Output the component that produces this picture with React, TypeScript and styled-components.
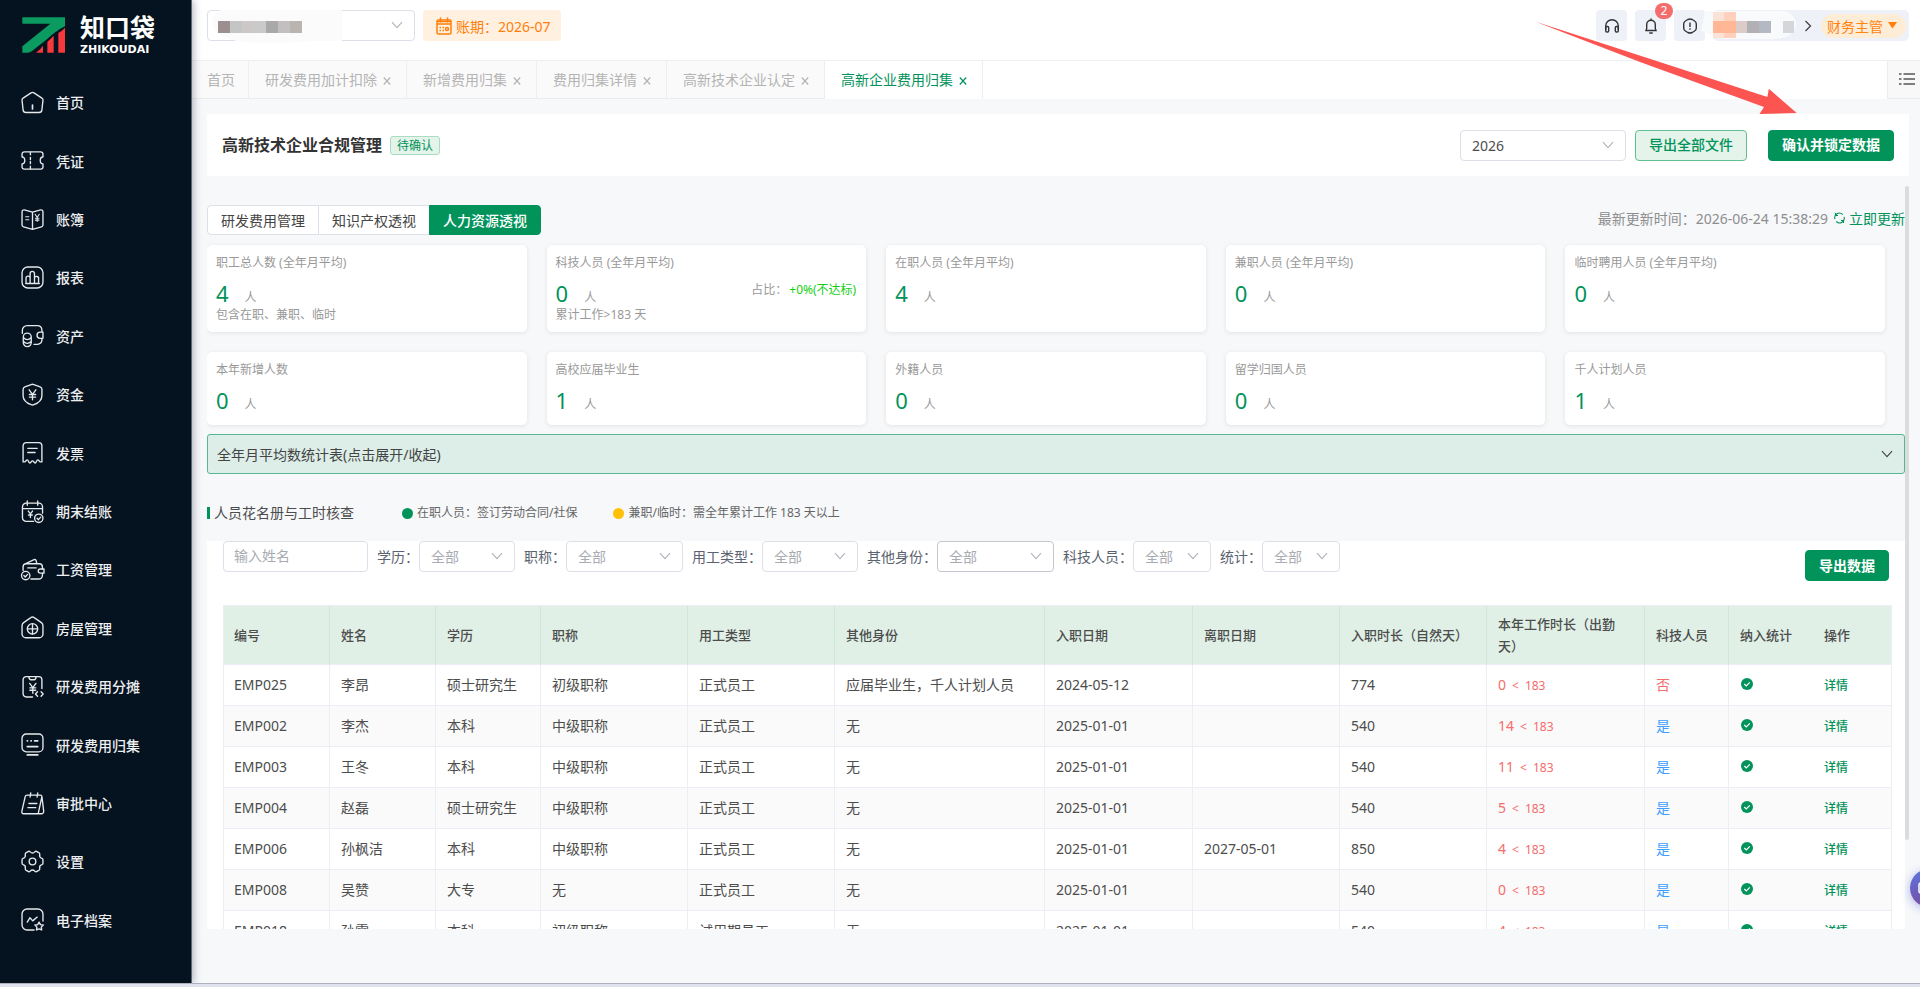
import React from "react";
import styled, { createGlobalStyle, css } from "styled-components";

const GREEN = "#02935b";
const FONT = `"Noto Sans", "Noto Sans CJK SC", sans-serif`;

const Global = createGlobalStyle`
  *, *::before, *::after { box-sizing: border-box; }
  body { margin: 0; font-family: ${FONT}; font-size: 14px; color: #4d4d4d; background: #f7f8fa; }
  button, input, select { font-family: inherit; font-size: 14px; }
  button { cursor: pointer; }
`;

/* ---------- shell ---------- */
const Shell = styled.div`
  display: flex;
  flex-direction: column;
  height: 100vh;
  overflow: hidden;
  position: relative;
`;
const Body = styled.div`
  display: flex;
  flex: 1;
  min-height: 0;
`;
const BottomStrip = styled.div`
  height: 4px;
  flex: none;
  background: #dfe2ee;
  border-top: 1px solid #adb1bb;
  position: relative;
  z-index: 2;
`;
const Sidebar = styled.aside`
  width: 192px;
  flex: none;
  display: flex;
  flex-direction: column;
  padding: 15px 0 34px;
  background: #05121f;
  border-right: 1px solid #5d6672;
  box-shadow: 1px 0 8px rgba(10, 20, 50, 0.35);
  position: relative;
  z-index: 1;
`;
const Logo = styled.div`
  display: flex;
  gap: 14px;
  padding-left: 22px;
  height: 58px;
  color: #fff;
`;
const LogoText = styled.div`
  display: flex;
  flex-direction: column;
  gap: 4px;
`;
const LogoName = styled.div`
  font-size: 25px;
  line-height: 24px;
  font-weight: 700;
`;
const LogoLatin = styled.div`
  font: 700 11px/14px "DejaVu Sans", sans-serif;
`;
const Menu = styled.nav`
  flex: 1;
  display: flex;
  flex-direction: column;
`;
const MenuItem = styled.a`
  flex: 1;
  display: flex;
  align-items: center;
  gap: 12px;
  padding-left: 21px;
  color: #eceef0;
  font-weight: 500;
  text-decoration: none;
  white-space: nowrap;
`;
const MenuSvg = styled.svg`
  width: 23px;
  height: 23px;
  flex: none;
  fill: none;
  stroke: #e6e9ec;
  stroke-width: 1.3;
  stroke-linecap: round;
  stroke-linejoin: round;
`;
const Main = styled.main`
  flex: 1;
  min-width: 0;
  display: flex;
  flex-direction: column;
`;

/* ---------- top bar ---------- */
const TopBar = styled.header`
  display: flex;
  gap: 8px;
  height: 61px;
  flex: none;
  padding: 10px 11px 0 15px;
  background: #fff;
  border-bottom: 1px solid #f0f0f0;
`;
const Period = styled.button`
  display: flex;
  align-items: center;
  gap: 4px;
  height: 31px;
  padding: 0 10px 0 13px;
  border: 0;
  border-radius: 4px;
  background: #fff0e0;
  color: #ff7f0a;
`;
const TopRight = styled.div`
  display: flex;
  gap: 8px;
  margin-left: auto;
`;
const IconButton = styled.button`
  position: relative;
  display: flex;
  align-items: center;
  justify-content: center;
  width: 31px;
  height: 31px;
  padding: 0;
  border: 0;
  border-radius: 4px;
  background: #eef1f8;
  color: #333;
`;
const Badge = styled.span`
  position: absolute;
  top: -7px;
  right: -7px;
  width: 18px;
  height: 16px;
  border-radius: 8px;
  background: #f56c6c;
  color: #fff;
  font-size: 12px;
  line-height: 16px;
`;
const User = styled.div`
  position: relative;
  display: flex;
  align-items: center;
  justify-content: flex-end;
  gap: 9px;
  width: 196px;
  height: 31px;
  padding-right: 3px;
  border-radius: 5px;
  background: #eef1f8;
`;
const Role = styled.button`
  display: flex;
  align-items: center;
  gap: 5px;
  height: 24px;
  padding: 0 9px 0 6px;
  border: 0;
  border-radius: 12px;
  background: #fdecd6;
  color: #ff8412;
`;
const Mosaic = styled.svg<{ $left: number; $top: number }>`
  position: absolute;
  left: ${(p) => p.$left}px;
  top: ${(p) => p.$top}px;
  pointer-events: none;
`;

/* ---------- page tabs ---------- */
const TabBar = styled.div`
  display: flex;
  height: 38px;
  flex: none;
  background: #fff;
`;
const PageTab = styled.div<{ $active?: boolean; $first?: boolean }>`
  display: flex;
  align-items: center;
  gap: 6px;
  padding: 0 ${(p) => (p.$first ? 13 : 15)}px 1px ${(p) => (p.$first ? 15 : 16)}px;
  border-right: 1px solid #eeeeee;
  border-bottom: 1px solid ${(p) => (p.$active ? "#fff" : "#ececec")};
  background: ${(p) => (p.$active ? "#fff" : "#fafafa")};
  color: ${(p) => (p.$active ? GREEN : "#b4b4b4")};
  white-space: nowrap;
  a { color: inherit; text-decoration: none; }
`;
const TabClose = styled.button`
  display: flex;
  padding: 3px 0 0;
  border: 0;
  background: none;
  color: inherit;
`;
const TabList = styled.button`
  display: flex;
  align-items: center;
  width: 33px;
  margin-left: auto;
  padding: 0 0 2px 11px;
  border: solid #ececec;
  border-width: 0 0 1px 1px;
  background: #f8f8f8;
  color: #555;
`;

/* ---------- common controls ---------- */
const SelectBox = styled.span<{ $w: number; $dark?: boolean; $muted?: boolean }>`
  position: relative;
  display: inline-flex;
  width: ${(p) => p.$w}px;
  height: 31px;
  select {
    appearance: none;
    width: 100%;
    padding: 0 28px 0 11px;
    border: 1px solid ${(p) => (p.$dark ? "#c4c7d0" : "#dcdfe8")};
    border-radius: 4px;
    background: #fff;
    color: ${(p) => (p.$muted ? "#a8abb2" : "#4d4d4d")};
  }
  > svg:last-child {
    position: absolute;
    right: 12px;
    top: 9px;
    color: #b0b3ba;
    pointer-events: none;
  }
`;
const Button = styled.button<{ $plain?: boolean }>`
  height: 31px;
  padding: 0 13px;
  border: 1px solid ${GREEN};
  border-radius: 4px;
  background: ${GREEN};
  color: #fff;
  font-weight: 700;
  line-height: 20px;
  white-space: nowrap;
  ${(p) =>
    p.$plain &&
    css`
      border-color: #62bf92;
      background: #e5f4ea;
      color: ${GREEN};
      font-weight: 500;
    `}
`;

/* ---------- content ---------- */
const Content = styled.div`
  flex: 1;
  min-height: 0;
  display: flex;
  flex-direction: column;
  padding: 15px 11px 54px 15px;
`;
const TitleCard = styled.section`
  display: flex;
  align-items: center;
  flex: none;
  height: 62px;
  padding: 0 15px;
  background: #fff;
`;
const PageTitle = styled.h1`
  margin: 0;
  font-size: 16px;
  line-height: 24px;
  color: #333;
`;
const Status = styled.span`
  margin: 0 auto 0 8px;
  padding: 0 6px;
  border: 1px solid #a9dcc0;
  border-radius: 3px;
  background: #e5f4ea;
  color: ${GREEN};
  font-size: 12px;
  line-height: 17px;
`;
const TitleActions = styled.div`
  display: flex;
  gap: 9px;
  ${Button} + ${Button} { margin-left: 12px; }
`;
const ScrollArea = styled.div`
  flex: 1;
  min-height: 0;
  display: flex;
`;
const ScrollTrack = styled.div`
  width: 4px;
  flex: none;
  padding-top: 10px;
`;
const ScrollThumb = styled.div`
  height: 88%;
  border-radius: 2px;
  background: #dcdcdc;
`;
const Column = styled.div`
  flex: 1;
  min-width: 0;
  display: flex;
  flex-direction: column;
  overflow: hidden;
`;
const ViewRow = styled.div`
  display: flex;
  align-items: center;
  justify-content: space-between;
  flex: none;
  padding: 29px 0 10px;
`;
const Segments = styled.div`
  display: flex;
`;
const Segment = styled.button<{ $active?: boolean }>`
  height: 30px;
  margin-left: -1px;
  padding: 0 13px;
  border: 1px solid ${(p) => (p.$active ? GREEN : "#dce0e8")};
  background: ${(p) => (p.$active ? GREEN : "#fff")};
  color: ${(p) => (p.$active ? "#fff" : "#444")};
  font-weight: ${(p) => (p.$active ? 500 : 400)};
  &:first-child { margin-left: 0; border-radius: 4px 0 0 4px; }
  &:last-child { border-radius: 0 4px 4px 0; }
`;
const Updated = styled.div`
  display: flex;
  align-items: center;
  gap: 6px;
  padding-bottom: 4px;
  color: #8e8e8e;
`;
const Refresh = styled.button`
  display: flex;
  align-items: center;
  gap: 4px;
  padding: 0;
  border: 0;
  background: none;
  color: ${GREEN};
`;
const Cards = styled.div`
  flex: none;
  display: grid;
  grid-template-columns: repeat(5, minmax(0, 1fr));
  gap: 20px;
  padding-right: 20px;
`;
const Card = styled.article`
  min-height: 73px;
  padding: 9px 10px 8px 9px;
  border-radius: 5px;
  background: #fff;
  box-shadow: 0 1px 5px rgba(0, 0, 0, 0.09);
  color: #999;
  font-size: 12px;
  line-height: 18px;
`;
const CardValue = styled.div`
  display: flex;
  align-items: baseline;
  gap: 16px;
  height: 25px;
  margin-top: 9px;
  strong { color: ${GREEN}; font-size: 22px; line-height: 25px; font-weight: 400; }
`;
const Ratio = styled.span`
  display: flex;
  gap: 2px;
  margin-left: auto;
  align-self: flex-start;
  b { color: #14cf14; font-weight: 400; }
`;
const Collapse = styled.button`
  display: flex;
  align-items: center;
  justify-content: space-between;
  flex: none;
  height: 40px;
  margin-top: 9px;
  padding: 0 11px 0 9px;
  border: 1px solid #56b792;
  border-radius: 3px;
  background: #ddeee8;
  color: #444;
`;
const Legend = styled.div`
  display: flex;
  align-items: center;
  flex: none;
  padding: 28px 0 17px;
  line-height: 22px;
`;
const SectionTitle = styled.h2`
  display: flex;
  align-items: center;
  gap: 4px;
  margin: 0 48px 0 0;
  font-size: 14px;
  font-weight: 400;
  &::before { content: ""; width: 3px; height: 12px; background: ${GREEN}; }
`;
const LegendItem = styled.span<{ $color: string }>`
  display: flex;
  align-items: center;
  gap: 4px;
  margin-right: 36px;
  color: #666;
  font-size: 12px;
  &::before { content: ""; width: 11px; height: 11px; border-radius: 50%; background: ${(p) => p.$color}; }
`;
const Panel = styled.section`
  flex: 1;
  min-height: 0;
  overflow: hidden;
  padding: 0 16px;
  background: #fff;
`;
const Filters = styled.form`
  display: flex;
  gap: 9px;
  height: 64px;
`;
const NameInput = styled.input`
  width: 145px;
  height: 31px;
  padding: 0 10px 2px;
  border: 1px solid #dcdfe8;
  border-radius: 4px;
  &::placeholder { color: #a8abb2; }
`;
const Filter = styled.label`
  display: flex;
  height: 31px;
  line-height: 31px;
  color: #5b6270;
  white-space: nowrap;
`;
const FilterAction = styled.div`
  margin-left: auto;
  padding-top: 9px;
`;
const Table = styled.table`
  width: 100%;
  table-layout: fixed;
  border-collapse: separate;
  border-spacing: 0;
  border: solid #ebeef5;
  border-width: 1px 1px 0;
  th, td { padding: 0 8px 0 11px; text-align: left; border-bottom: 1px solid #ebeef5; border-right: 1px solid #ebeef5; }
  th { height: 59px; padding-right: 14px; background: #e0f0e6; border-right-color: #d2e5d9; font-size: 13px; line-height: 22px; font-weight: 500; }
  td { height: 41px; line-height: 20px; white-space: nowrap; }
  tr > :first-child { padding-left: 10px; }
  tr > :nth-last-child(-n + 3) { padding-right: 0; }
  tr > :nth-last-child(-n + 2) { border-right: 0; }
  tbody tr:nth-child(even) { background: #fafafa; }
`;
const Days = styled.span`
  display: flex;
  align-items: baseline;
  gap: 6px;
  color: #f56c6c;
  small { font-size: 12px; }
`;
const YesNo = styled.span<{ $yes: boolean }>`
  color: ${(p) => (p.$yes ? "#409eff" : "#f56c6c")};
`;
const Detail = styled.a`
  color: ${GREEN};
  font-size: 12px;
  font-weight: 500;
  text-decoration: none;
`;
const Check = styled.svg`
  display: block;
  margin-bottom: 3px;
`;

/* ---------- overlays ---------- */
const Arrow = styled.svg`
  position: absolute;
  top: 18px;
  right: 120px;
  z-index: 3;
  pointer-events: none;
`;
const Assistant = styled.button`
  position: absolute;
  right: -28px;
  bottom: 80px;
  width: 38px;
  height: 38px;
  padding: 0 0 0 8px;
  border: 0;
  border-radius: 50%;
  background: linear-gradient(#5d74de, #7650a6);
  box-shadow: 0 2px 10px rgba(96, 110, 220, 0.5);
  text-align: left;
`;

const Chevron = ({ size = 12 }: { size?: number }) => (
  <svg width={size} height={size} viewBox="0 0 12 12" fill="none" stroke="currentColor" strokeWidth="1.1">
    <path d="M1 3.2 6 8.7 11 3.2" />
  </svg>
);

const menu: { label: string; icon: React.ReactNode }[] = [
  { label: "首页", icon: <><path d="M9.6 1.8a2.6 2.6 0 0 1 2.8 0l7.6 5a2 2 0 0 1 1 2.1l-1 9.2a2.8 2.8 0 0 1-2.8 2.5H4.8a2.8 2.8 0 0 1-2.8-2.5l-1-9.2a2 2 0 0 1 1-2.1z" /><path d="M11 13.5v3.6" strokeWidth="1.6" /></> },
  { label: "凭证", icon: <><path d="M3 2.7h16a2 2 0 0 1 2 2v3q-2.6 0-2.6 3.3T21 14.3v3a2 2 0 0 1-2 2H3a2 2 0 0 1-2-2v-3q2.6 0 2.6-3.3T1 7.7v-3a2 2 0 0 1 2-2z" /><path d="M9 3v2.5M9 8v2M9 12v2M9 16.5V19" /></> },
  { label: "账簿", icon: <><path d="M11 4v16.5L2.4 18A1.8 1.8 0 0 1 1 16.3V3.6a1.8 1.8 0 0 1 2.2-1.8zM11 4v16.5l8.6-2.5a1.8 1.8 0 0 0 1.4-1.7V3.6a1.8 1.8 0 0 0-2.2-1.8z" /><path d="M4.5 8.3h3M4.5 11.3h3M13.5 6l2 3 2-3M15.5 9v4M13.8 9.8h3.4M13.8 11.6h3.4" strokeWidth="1" /></> },
  { label: "报表", icon: <><rect x="1" y="1" width="20" height="20" rx="5.5" /><path d="M4.8 16.7v-5a1.8 1.8 0 0 1 3.9 0v5M8.7 16.7V7.3a2 2 0 0 1 4.2 0v9.4M12.9 11.5a1.9 1.9 0 0 1 3.9 1v4.2M4.5 16.7h13" /></> },
  { label: "资产", icon: <><path d="M1.3 9V6a4.5 4.5 0 0 1 4.5-4.5h10A4.2 4.2 0 0 1 20 5.7v2.1h-1.7a2.7 2.7 0 0 0 0 5.9H20v1.6a4.2 4.2 0 0 1-4.2 4.2h-3.3M18.5 7.8H21v5.9h-2.5" /><path d="M2.2 12.5a3.8 3.8 0 0 1 7.6 0v5.300a3.800 3.800 0 0 1-7.600 0zM2.200 13q3.800 4 7.600 0M2.200 16.500q3.800 4 7.600 0" /></> },
  { label: "资金", icon: <><path d="M9.7 1.5a3.6 3.6 0 0 1 2.6 0l6 2.2A2.6 2.6 0 0 1 20 6.1v6c0 4-3.3 6.9-7.7 8.7a3.4 3.4 0 0 1-2.6 0C5.3 19 2 16.1 2 12.1v-6a2.6 2.6 0 0 1 1.7-2.4z" /><path d="m7.8 6.5 3.2 4.3 3.2-4.3M11 10.8V16M8 11h6M8 13.5h6" /></> },
  { label: "发票", icon: <><path d="M2 20V4.5a3 3 0 0 1 3-3h12a3 3 0 0 1 3 3V20h-1.5c-1.2 0-1.2-2-2.500-2s-1.200 3-2.500 3-1.200-2-2.500-2-1.200 2-2.500 2S7.300 18 6 18s-1.300 2-2.500 2z" /><path d="M6.5 7h9M6.5 11h7" /></> },
  { label: "期末结账", icon: <><path d="M12 20.5H5a3.6 3.6 0 0 1-3.6-3.6V6.6A3.6 3.6 0 0 1 5 3h12a3.6 3.6 0 0 1 3.6 3.6v6M1.5 8.2h19M6 1v4M16 1v4M7 10.6l2 2.6 2-2.6M9 13.2v3.6M7.2 14.3h3.6" /><circle cx="17" cy="17.5" r="4" /><path d="m15.4 17.5 1.3 1.3 2.2-2.4" /></> },
  { label: "工资管理", icon: <><path d="M2 12V8.5a3 3 0 0 1 3-3h12.500a3 3 0 0 1 3 3v2M20.500 14.500v2a3.600 3.600 0 0 1-3.600 3.600H9.500M3 6l9.500-4.500a1.500 1.500 0 0 1 2 1.100l.6 2.900M6.500 9.500h8" /><path d="M18.5 10.5H22v4h-3.5a2 2 0 0 1 0-4z" /><circle cx="4.5" cy="16.8" r="4" /><path d="m2.8 16.8 1.3 1.3 2.200-2.400" /></> },
  { label: "房屋管理", icon: <><path d="M9.4 1.5a2.7 2.7 0 0 1 3.2 0l6.9 4.8A3.5 3.5 0 0 1 21 9v8.2a3.6 3.6 0 0 1-3.6 3.6H4.6A3.6 3.6 0 0 1 1 17.2V9a3.5 3.5 0 0 1 1.5-2.7z" /><circle cx="11" cy="12.3" r="5" /><path d="M11 7.5v9.6M6.2 12.3h9.6" /></> },
  { label: "研发费用分摊", icon: <><path d="M11 21H5a3 3 0 0 1-3-3V4.500a3 3 0 0 1 3-3h12a3 3 0 0 1 3 3V13M7.500 1.500q.3 3 2 3h3q1.700 0 2-3" /><path d="m8.3 8 3 4 3-4M11.3 12v5.5M8.5 12.3h5.6M8.5 14.6h5.6M15.8 16l-2 2.2 2 2.2M19.2 16l2 2.2-2 2.2" /></> },
  { label: "研发费用归集", icon: <><rect x="1" y="1" width="20" height="17" rx="4" /><path d="M6 7.500h.3M9.500 7.500h.3M13 7.500h3M6 13h10M6 21h10" strokeWidth="1.6" /></> },
  { label: "审批中心", icon: <><path d="M5.8 3h12.7a1.5 1.5 0 0 1 1.5 1.3l1.7 14a2.2 2.2 0 0 1-2.2 2.500h-17A1.700 1.700 0 0 1 .8 18.600L4 4.500A2 2 0 0 1 5.800 3zM20 4.500l-3.500 16M9.300.8l-.6 4M16 .8l-.6 4M7.600 11h7.500M6.600 15h7.500" /></> },
  { label: "设置", icon: <><path d="M7.200 1.300Q8.200 1 8.800 1.800 11 4 13.200 1.800 13.800 1 14.800 1.300L17.400 2.800Q18.200 3.400 17.900 4.300 17.300 7.300 20 8 21 8.300 21 9.300V12.700Q21 13.700 20 14 17.300 14.700 17.900 17.700 18.200 18.600 17.400 19.200L14.800 20.700Q13.800 21 13.200 20.200 11 18 8.800 20.200 8.200 21 7.200 20.700L4.600 19.200Q3.800 18.600 4.100 17.700 4.700 14.700 2 14 1 13.700 1 12.700V9.300Q1 8.300 2 8 4.700 7.300 4.100 4.300 3.800 3.400 4.600 2.800z" /><circle cx="11" cy="11" r="3.2" /></> },
  { label: "电子档案", icon: <><path d="M12.5 21H5.800A4.800 4.800 0 0 1 1 16.200V5.800A4.800 4.800 0 0 1 5.800 1h10.400A4.800 4.800 0 0 1 21 5.800v6.700" /><path d="m6 13.500 2.600-4.200 2.600 3 4.300-3.600" /><path d="m17.3 13.500 1.300 2.400 2.700.4-1.900 2 .4 2.700-2.500-1-2.500 1 .4-2.700-1.900-2 2.700-.4z" /></> },
];

const openTabs = ["研发费用加计扣除", "新增费用归集", "费用归集详情", "高新技术企业认定", "高新企业费用归集"];

type Stat = { title: string; value: number; note?: string; ratio?: string };
const stats: Stat[] = [
  { title: "职工总人数 (全年月平均)", value: 4, note: "包含在职、兼职、临时" },
  { title: "科技人员 (全年月平均)", value: 0, note: "累计工作>183 天", ratio: "+0%(不达标)" },
  { title: "在职人员 (全年月平均)", value: 4 },
  { title: "兼职人员 (全年月平均)", value: 0 },
  { title: "临时聘用人员 (全年月平均)", value: 0 },
  { title: "本年新增人数", value: 0 },
  { title: "高校应届毕业生", value: 1 },
  { title: "外籍人员", value: 0 },
  { title: "留学归国人员", value: 0 },
  { title: "千人计划人员", value: 1 },
];

const filters = [
  { label: "学历", width: 96 },
  { label: "职称", width: 117 },
  { label: "用工类型", width: 96 },
  { label: "其他身份", width: 117, dark: true },
  { label: "科技人员", width: 78 },
  { label: "统计", width: 78 },
];

const columns: [string, number][] = [
  ["编号", 106], ["姓名", 106], ["学历", 105], ["职称", 147], ["用工类型", 147], ["其他身份", 210],
  ["入职日期", 148], ["离职日期", 147], ["入职时长（自然天）", 147], ["本年工作时长（出勤天）", 158],
  ["科技人员", 84], ["纳入统计", 84], ["操作", 78],
];

const rows: [string, string, string, string, string, string, string, string, number, number, boolean][] = [
  ["EMP025", "李昂", "硕士研究生", "初级职称", "正式员工", "应届毕业生，千人计划人员", "2024-05-12", "", 774, 0, false],
  ["EMP002", "李杰", "本科", "中级职称", "正式员工", "无", "2025-01-01", "", 540, 14, true],
  ["EMP003", "王冬", "本科", "中级职称", "正式员工", "无", "2025-01-01", "", 540, 11, true],
  ["EMP004", "赵磊", "硕士研究生", "中级职称", "正式员工", "无", "2025-01-01", "", 540, 5, true],
  ["EMP006", "孙枫洁", "本科", "中级职称", "正式员工", "无", "2025-01-01", "2027-05-01", 850, 4, true],
  ["EMP008", "吴赞", "大专", "无", "正式员工", "无", "2025-01-01", "", 540, 0, true],
  ["EMP018", "孙雷", "本科", "初级职称", "试用期员工", "无", "2025-01-01", "", 540, 4, true],
];

const companyBlocks = ["#9b908f", "#c4c6c5", "#cdc8c8", "#cbcaca", "#a9a9a8", "#c3bfc0", "#b9b4b0"];

export default function App() {
  return (
    <Shell lang="zh-CN">
      <Global />
      <Body>
        <Sidebar>
          <Logo>
            <svg width="44" height="38" viewBox="68 44 132 114">
              <path fill="#0b9b60" d="M69 51H197V78Q172 90 140 119L98 152Q92 157 85 157H69V138L153 70H69z" />
              <path fill="#f8383c" d="M110 157Q124 147 131 136V157zM144 157V125L163 106V157zM177 157V98Q188 92 197 82V157z" />
            </svg>
            <LogoText>
              <LogoName>知口袋</LogoName>
              <LogoLatin>ZHIKOUDAI</LogoLatin>
            </LogoText>
          </Logo>
          <Menu>
            {menu.map((m) => (
              <MenuItem href="#" key={m.label}>
                <MenuSvg viewBox="0 0 22 22" overflow="visible">{m.icon}</MenuSvg>
                {m.label}
              </MenuItem>
            ))}
          </Menu>
        </Sidebar>

        <Main>
          <TopBar>
            <SelectBox $w={208}>
              <select aria-label="企业" />
              <Mosaic $left={5} $top={0} width="132" height="34" viewBox="0 0 132 34">
                <path d="M8 0H130V31H100Q60 35 30 32Q0 26 0 14Q0 4 8 0z" fill="#fbfbfb" />
                {companyBlocks.map((c, i) => (
                  <rect key={i} x={6 + i * 12} y="11" width="12" height="12" fill={c} />
                ))}
              </Mosaic>
              <Chevron />
            </SelectBox>
            <Period>
              <svg width="16" height="18" viewBox="0 0 16 18" fill="none" stroke="currentColor" strokeWidth="1.5">
                <rect x="1" y="3" width="14" height="14" rx="1.5" />
                <path d="M1 7h14M4.5 .5v5M11.5 .5v5M1 4.5h14M3.5 10.5H5M6.5 10.5H8M3.5 13.5H5M6.5 13.5H8" />
                <circle cx="11" cy="12" r="1.5" />
              </svg>
              账期：2026-07
            </Period>
            <TopRight>
              <IconButton aria-label="客服">
                <svg width="16" height="16" viewBox="0 0 16 16" fill="none" stroke="currentColor" strokeWidth="1.4">
                  <path d="M1.7 12V8a6.3 6.3 0 0 1 12.6 0v4" />
                  <rect x="1.7" y="8.5" width="3" height="5.5" rx="1.2" />
                  <rect x="11.3" y="8.5" width="3" height="5.5" rx="1.2" />
                </svg>
              </IconButton>
              <IconButton aria-label="消息">
                <svg width="16" height="16" viewBox="0 0 16 16" fill="none" stroke="currentColor" strokeWidth="1.4">
                  <path d="M3 12.5 3.700 10.500V6.500a4.300 4.300 0 0 1 8.600 0v4L13 12.500zM6.300 15h3.400M8 .5V2" />
                </svg>
                <Badge>2</Badge>
              </IconButton>
              <IconButton aria-label="提示">
                <svg width="16" height="16" viewBox="0 0 16 16" fill="none" stroke="currentColor" strokeWidth="1.4">
                  <path d="M5.8 1.5Q8 .5 10.2 1.5L12.6 3Q14.3 4 14.3 6v4q0 2-1.700 3l-2.400 1.500Q8 15.500 5.800 14.500L3.400 13Q1.700 12 1.700 10V6q0-2 1.700-3zM8 4.500V9M8 10.300v1.400" />
                </svg>
              </IconButton>
              <User>
                <Mosaic $left={-12} $top={1} width="96" height="29" viewBox="0 0 96 29">
                  <path d="M4 0H84Q96 4 95 15Q92 28 70 28H22L0 20z" fill="#f9fafc" />
                  <path d="M12 1h11v9H12zM12 22h11v5H12z" fill="#fbe2d7" />
                  <path d="M23 1h12v9H23zM23 22h12v5H23z" fill="#ffd0bb" />
                  <path d="M12 10h23v12H12z" fill="#ffb795" />
                  <path d="M35 10h11v12H35z" fill="#dccbc9" />
                  <path d="M46 10h12v12H46z" fill="#b1b1b5" />
                  <path d="M58 10h12v12H58z" fill="#b3b8c2" />
                  <path d="M82 10h11v12H82z" fill="#d5d6da" />
                </Mosaic>
                <svg width="8" height="12" viewBox="0 0 8 12" fill="none" stroke="#444" strokeWidth="1.3">
                  <path d="m1.500 1 5 5-5 5" />
                </svg>
                <Role>
                  财务主管
                  <svg width="9" height="7" viewBox="0 0 9 7"><path d="M0 0h9L4.500 6.500z" fill="#ff7f0a" /></svg>
                </Role>
              </User>
            </TopRight>
          </TopBar>

          <TabBar>
            <PageTab $first><a href="#">首页</a></PageTab>
            {openTabs.map((t, i) => (
              <PageTab key={t} $active={i === 4}>
                <a href="#">{t}</a>
                <TabClose aria-label="关闭">
                  <svg width="8" height="8" viewBox="0 0 8 8" stroke="currentColor" strokeWidth="1.2"><path d="M.8.5 7.200 7.500M7.200.5.8 7.500" /></svg>
                </TabClose>
              </PageTab>
            ))}
            <TabList aria-label="标签列表">
              <svg width="16" height="14" viewBox="0 0 16 14" stroke="currentColor" strokeWidth="1.5">
                <path d="M0 2h2.500M4.500 2H16M0 7h2.500M4.500 7H16M0 12h2.500M4.500 12H16" />
              </svg>
            </TabList>
          </TabBar>

          <Content>
            <TitleCard>
              <PageTitle>高新技术企业合规管理</PageTitle>
              <Status>待确认</Status>
              <TitleActions>
                <SelectBox $w={166}>
                  <select aria-label="年度"><option>2026</option></select>
                  <Chevron />
                </SelectBox>
                <Button $plain>导出全部文件</Button>
                <Button>确认并锁定数据</Button>
              </TitleActions>
            </TitleCard>

            <ScrollArea>
              <Column>
                <ViewRow>
                  <Segments>
                    <Segment>研发费用管理</Segment>
                    <Segment>知识产权透视</Segment>
                    <Segment $active>人力资源透视</Segment>
                  </Segments>
                  <Updated>
                    最新更新时间：2026-06-24 15:38:29
                    <Refresh>
                      <svg width="11" height="12" viewBox="0 0 11 12" fill="none" stroke="currentColor" strokeWidth="1.1">
                        <path d="M1 7.200A4.600 4.600 0 0 1 8.800 2.700M1.500 1v2.500H4M10 4.800A4.600 4.600 0 0 1 2.200 9.300M9.500 11V8.500H7" />
                      </svg>
                      立即更新
                    </Refresh>
                  </Updated>
                </ViewRow>

                <Cards>
                  {stats.map((s) => (
                    <Card key={s.title}>
                      <div>{s.title}</div>
                      <CardValue>
                        <strong>{s.value}</strong>
                        <span>人</span>
                        {s.ratio && <Ratio>占比：<b>{s.ratio}</b></Ratio>}
                      </CardValue>
                      {s.note && <div>{s.note}</div>}
                    </Card>
                  ))}
                </Cards>

                <Collapse>
                  全年月平均数统计表(点击展开/收起)
                  <Chevron />
                </Collapse>

                <Legend>
                  <SectionTitle>人员花名册与工时核查</SectionTitle>
                  <LegendItem $color={GREEN}>在职人员：签订劳动合同/社保</LegendItem>
                  <LegendItem $color="#ffc107">兼职/临时：需全年累计工作 183 天以上</LegendItem>
                </Legend>

                <Panel>
                  <Filters>
                    <NameInput placeholder="输入姓名" aria-label="姓名" />
                    {filters.map((f) => (
                      <Filter key={f.label}>
                        {f.label}：
                        <SelectBox $w={f.width} $dark={f.dark} $muted>
                          <select><option>全部</option></select>
                          <Chevron />
                        </SelectBox>
                      </Filter>
                    ))}
                    <FilterAction>
                      <Button type="button">导出数据</Button>
                    </FilterAction>
                  </Filters>
                  <Table>
                    <colgroup>
                      {columns.map(([name, w]) => <col key={name} width={w} />)}
                    </colgroup>
                    <thead>
                      <tr>{columns.map(([name]) => <th key={name}>{name}</th>)}</tr>
                    </thead>
                    <tbody>
                      {rows.map((r) => (
                        <tr key={r[0]}>
                          {r.slice(0, 9).map((c, i) => <td key={i}>{c}</td>)}
                          <td><Days>{r[9]}<small>&lt;</small><small>183</small></Days></td>
                          <td><YesNo $yes={r[10]}>{r[10] ? "是" : "否"}</YesNo></td>
                          <td>
                            <Check width="14" height="12" viewBox="0 0 14 12">
                              <circle cx="7" cy="6" r="6" fill={GREEN} />
                              <path d="m4.300 6 2 2 3.500-3.700" fill="none" stroke="#fff" strokeWidth="1.2" />
                            </Check>
                          </td>
                          <td><Detail href="#">详情</Detail></td>
                        </tr>
                      ))}
                    </tbody>
                  </Table>
                </Panel>
              </Column>
              <ScrollTrack><ScrollThumb /></ScrollTrack>
            </ScrollArea>
          </Content>
        </Main>
      </Body>
      <BottomStrip />

      <Arrow width="265" height="100" viewBox="1535 18 265 100">
        <path fill="#fb5451" d="M1535 21.500 1767.400 97 1768.800 88.700 1796.700 113 1759.500 114 1764 107 1640 62Z" />
      </Arrow>
      <Assistant aria-label="智能助手">
        <svg width="20" height="12" viewBox="0 0 20 12" fill="none" stroke="#fff" strokeWidth="1.5">
          <rect x="1" y="1" width="18" height="10" rx="2" />
        </svg>
      </Assistant>
    </Shell>
  );
}
